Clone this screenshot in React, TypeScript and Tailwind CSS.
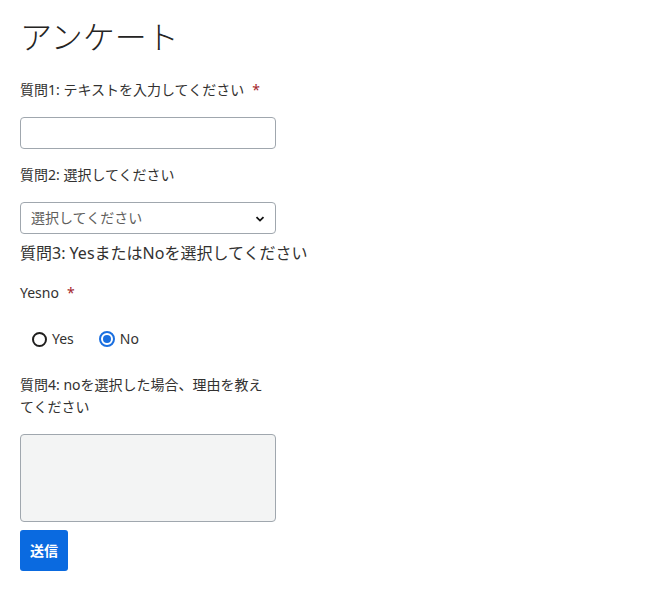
import React from "react";

const Star = () => <span className="ml-2 text-[#a4262c]">*</span>;

export default function App() {
  return (
    <div
      className="min-h-[596px] bg-white px-5 pt-[17px] text-[#323130]"
      style={{ fontFamily: '"Noto Sans", "Noto Sans CJK JP", sans-serif' }}
    >
      <h1 className="text-[32px] leading-[40px] font-light text-[#252423]">アンケート</h1>

      <form className="flex flex-col w-[256px]" onSubmit={(e) => e.preventDefault()}>
        <label className="mt-[23px] text-[14px] leading-[20px] whitespace-nowrap">
          質問1: テキストを入力してください
          <Star />
        </label>
        <input
          type="text"
          className="mt-[17px] h-[32px] w-[256px] rounded-[4px] border border-[#a0a7ae] bg-white px-2 text-[14px] outline-none"
        />

        <label className="mt-[16px] text-[14px] leading-[20px]">質問2: 選択してください</label>
        <div className="relative mt-[17px] h-[32px] w-[256px] rounded-[4px] border border-[#a0a7ae] bg-white">
          <span className="absolute left-[10px] top-[5px] text-[14px] leading-[20px] text-[#605e5c]">
            選択してください
          </span>
          <svg
            className="absolute right-[10px] top-[11px]"
            width="10"
            height="10"
            viewBox="0 0 10 10"
          >
            <path d="M1.5 3.2 L5 6.6 L8.5 3.2" fill="none" stroke="#111" strokeWidth="1.8" />
          </svg>
        </div>

        <div className="mt-[7px] text-[16px] leading-[24px] whitespace-nowrap">
          質問3: YesまたはNoを選択してください
        </div>

        <label className="mt-[18px] text-[14px] leading-[20px]">
          Yesno
          <Star />
        </label>

        <div className="mt-[26px] flex items-center pl-3 text-[14px] leading-[20px]">
          <label className="flex items-center gap-[5px]">
            <span className="h-[15px] w-[15px] rounded-full border-2 border-[#201f1e] bg-white" />
            Yes
          </label>
          <label className="ml-[25px] flex items-center gap-[5px]">
            <span className="flex h-[16px] w-[16px] items-center justify-center rounded-full border-2 border-[#1a6fe0] bg-white">
              <span className="h-[8px] w-[8px] rounded-full bg-[#1a6fe0]" />
            </span>
            No
          </label>
        </div>

        <label className="mt-[25px] w-[248px] text-[14px] leading-[22px]">
          質問4: noを選択した場合、理由を教えてください
        </label>
        <textarea className="mt-[16px] h-[88px] w-[256px] resize-none rounded-[4px] border border-[#a0a7ae] bg-[#f3f4f4] outline-none" />

        <div className="mt-[8px]">
          <button
            type="submit"
            className="h-[41px] w-[48px] rounded-[3px] bg-[#0a6ae0] text-[14px] font-bold text-white"
          >
            送信
          </button>
        </div>
      </form>
    </div>
  );
}
